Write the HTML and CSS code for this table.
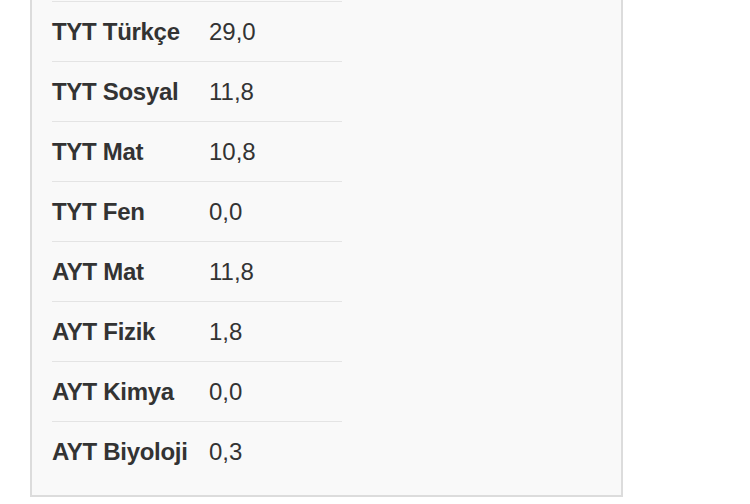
FILE: index.html
```html
<!DOCTYPE html>
<html lang="tr">
<head>
    <meta charset="UTF-8">
    <meta name="viewport" content="width=device-width, initial-scale=1.0">
    <title>Netler</title>
    <link rel="stylesheet" href="styles.css">
</head>
<body>
    <div class="panel">
        <table class="net-table">
            <tr><th>TYT Türkçe</th><td>29,0</td></tr>
            <tr><th>TYT Sosyal</th><td>11,8</td></tr>
            <tr><th>TYT Mat</th><td>10,8</td></tr>
            <tr><th>TYT Fen</th><td>0,0</td></tr>
            <tr><th>AYT Mat</th><td>11,8</td></tr>
            <tr><th>AYT Fizik</th><td>1,8</td></tr>
            <tr><th>AYT Kimya</th><td>0,0</td></tr>
            <tr><th>AYT Biyoloji</th><td>0,3</td></tr>
        </table>
    </div>
</body>
</html>
```

FILE: styles.css
```css
body {
    margin: 0;
    background: #ffffff;
    font-family: 'Liberation Sans', Arial, sans-serif;
    color: #333333;
}

.panel {
    box-sizing: border-box;
    width: 593px;
    margin-left: 30px;
    padding: 1px 20px 14px 20px;
    background: #f9f9f9;
    border: 2px solid #dcdcdc;
    border-top: 0;
}

.net-table {
    border-collapse: collapse;
    width: 290px;
}

.net-table tr {
    border-top: 1px solid #e4e4e4;
}

.net-table th,
.net-table td {
    height: 59px;
    padding: 0;
    font-size: 24px;
    text-align: left;
    vertical-align: middle;
}

.net-table th {
    width: 157px;
    font-weight: bold;
    letter-spacing: -0.3px;
}

.net-table td {
    font-weight: normal;
}
```
